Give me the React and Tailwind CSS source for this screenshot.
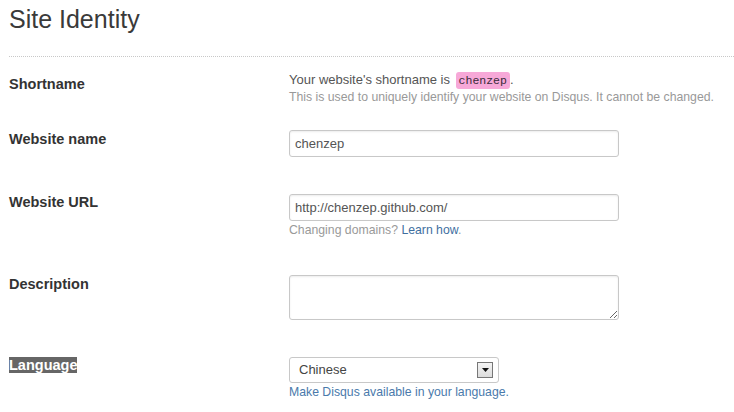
import React from 'react';

const labelCls = "w-[280px] shrink-0 text-[14.5px] leading-[18px] font-bold text-[#333]";
const inputCls = "w-[330px] h-[27px] px-[5px] rounded-[3px] border border-[#c8c8c8] bg-white text-[13px] text-[#555] outline-none shadow-[inset_0_1px_2px_rgba(0,0,0,0.08)]";

const App = () => {
    return (
        <div className="w-[734px] h-[412px] overflow-hidden bg-white pl-[9px] font-['Liberation_Sans',Arial,sans-serif]">
            <h1 className="pt-[4px] text-[25px] leading-[30px] text-[#3a3a3a]">Site Identity</h1>
            <div className="mt-[22px] border-t border-dotted border-[#c8c8c8]" />

            {/* Shortname */}
            <div className="flex mt-[14px]">
                <div className={`${labelCls} pt-[4px]`}>Shortname</div>
                <div>
                    <p className="text-[13px] leading-[17px] text-[#555]">
                        Your website's shortname is{' '}
                        <code className="ml-[2px] px-[3px] py-[2px] rounded-[3px] bg-[#f7a8d8] text-[11.5px] text-[#3a2a3a] font-['Liberation_Mono',monospace]">chenzep</code>.
                    </p>
                    <p className="text-[12.25px] leading-[16px] text-[#999]">
                        This is used to uniquely identify your website on Disqus. It cannot be changed.
                    </p>
                </div>
            </div>

            {/* Website name */}
            <div className="flex mt-[25px]">
                <div className={labelCls}>Website name</div>
                <input type="text" readOnly value="chenzep" className={inputCls} />
            </div>

            {/* Website URL */}
            <div className="flex mt-[37px]">
                <div className={`${labelCls} -mt-[1px]`}>Website URL</div>
                <div>
                    <input type="text" readOnly value="http://chenzep.github.com/" className={inputCls} />
                    <p className="mt-[1px] text-[12.25px] leading-[16px] text-[#999]">
                        Changing domains? <a href="#" className="text-[#3f6f9f]">Learn how</a>.
                    </p>
                </div>
            </div>

            {/* Description */}
            <div className="flex mt-[37px]">
                <div className={labelCls}>Description</div>
                <textarea readOnly className="w-[330px] h-[45px] px-[5px] py-[3px] rounded-[3px] border border-[#c8c8c8] bg-white text-[13px] text-[#555] outline-none resize shadow-[inset_0_1px_2px_rgba(0,0,0,0.08)]" />
            </div>

            {/* Language */}
            <div className="flex mt-[37px]">
                <div className={`${labelCls} -mt-[1px]`}>
                    <span className="bg-[#666] text-white">Language</span>
                </div>
                <div>
                    <div className="w-[210px] h-[26px] flex items-center justify-between pl-[9px] pr-[5px] rounded-[3px] border border-[#c8c8c8] bg-white">
                        <span className="text-[13px] text-[#444]">Chinese</span>
                        <span className="w-[16px] h-[16px] flex items-center justify-center border border-[#777] bg-gradient-to-b from-[#f4f4f4] to-[#dcdcdc]">
                            <svg width="7" height="4" viewBox="0 0 7 4">
                                <path d="M0 0 H7 L3.5 4 Z" fill="#111" />
                            </svg>
                        </span>
                    </div>
                    <p className="mt-[1px] text-[12.25px] leading-[16px] text-[#4a7aab]">
                        <a href="#">Make Disqus available in your language.</a>
                    </p>
                </div>
            </div>
        </div>
    );
};

export default App;
